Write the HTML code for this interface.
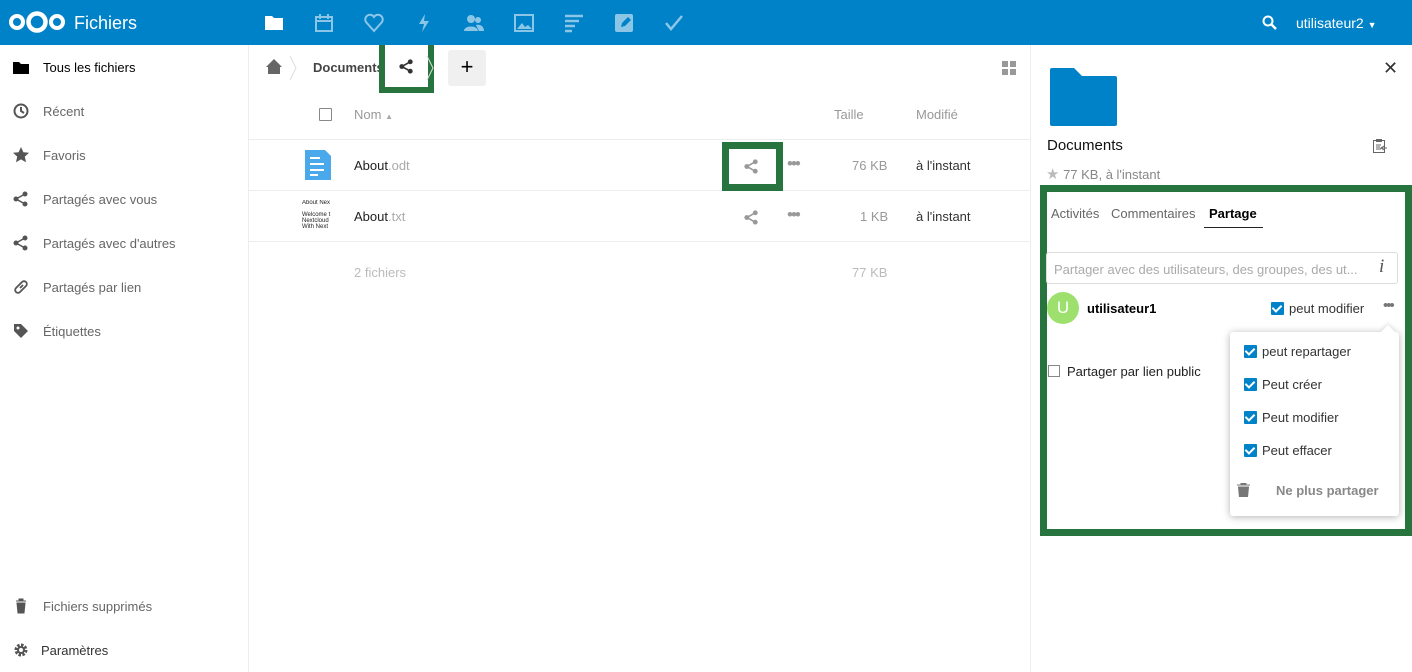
<!DOCTYPE html>
<html><head><meta charset="utf-8"><style>
*{box-sizing:border-box;margin:0;padding:0}
body{width:1412px;height:672px;overflow:hidden;font-family:"Liberation Sans",sans-serif;font-size:13px;color:#222;background:#fff;position:relative}
.abs{position:absolute}
#hdr{left:0;top:0;width:1412px;height:45px;background:#0082c9}
.ni{position:absolute;top:13px;width:20px;height:20px;opacity:.55}
#side{left:0;top:45px;width:249px;height:627px;border-right:1px solid #ededed}
.si{position:absolute;left:43px;color:#666;font-size:13px}
.sic{position:absolute;left:13px;width:16px;height:16px}
.g{color:#999}
.row{position:absolute;left:249px;width:781px;border-top:1px solid #ededed}
#rp{left:1030px;top:45px;width:382px;height:627px;border-left:1px solid #ededed}
.gb{border:7px solid #27743e;position:absolute}
.cb{position:absolute;width:13px;height:13px;background:#0082c9;border-radius:1px}
.cb:after{content:"";position:absolute;left:3px;top:1px;width:4px;height:7px;border:solid #fff;border-width:0 2px 2px 0;transform:rotate(45deg)}
.dots{position:absolute;color:#999;font-size:17px;letter-spacing:-2px}
</style></head><body>
<div id="hdr" class="abs">
 <svg class="abs" style="left:8px;top:10px" width="58" height="24" viewBox="0 0 58 24"><circle cx="9" cy="12" r="6" fill="none" stroke="#fff" stroke-width="4"/><circle cx="29" cy="12" r="8.5" fill="none" stroke="#fff" stroke-width="4.5"/><circle cx="49" cy="12" r="6" fill="none" stroke="#fff" stroke-width="4"/></svg>
 <div class="abs" style="left:74px;top:13px;color:#fff;font-size:18px">Fichiers</div>
 <svg class="ni" style="left:264px;opacity:1" viewBox="0 0 20 20"><path d="M1 3h7l2 2h9v12H1z" fill="#fff"/></svg>
 <svg class="ni" style="left:314px" viewBox="0 0 20 20"><rect x="2" y="4" width="16" height="14" fill="none" stroke="#fff" stroke-width="2"/><path d="M2 8h16M6 1v5M14 1v5" stroke="#fff" stroke-width="2"/></svg>
 <svg class="ni" style="left:364px" viewBox="0 0 20 20"><path d="M10 18L2 9a4 4 0 0 1 8-5 4 4 0 0 1 8 5z" fill="none" stroke="#fff" stroke-width="2"/></svg>
 <svg class="ni" style="left:414px" viewBox="0 0 20 20"><path d="M11 1L5 11h5l-2 8 7-11h-5z" fill="#fff"/></svg>
 <svg class="ni" style="left:464px" viewBox="0 0 20 20"><circle cx="7" cy="6" r="4" fill="#fff"/><circle cx="14" cy="7" r="3" fill="#fff"/><path d="M0 18c0-6 14-6 14 0zM12 12c4-1 8 1 8 6h-5z" fill="#fff"/></svg>
 <svg class="ni" style="left:514px" viewBox="0 0 20 20"><rect x="1" y="2" width="18" height="16" fill="none" stroke="#fff" stroke-width="2"/><path d="M3 16l5-6 3 4 3-2 4 4z" fill="#fff"/></svg>
 <svg class="ni" style="left:564px" viewBox="0 0 20 20"><path d="M1 3h18M1 8h14M1 13h10M1 18h7" stroke="#fff" stroke-width="2.5"/></svg>
 <svg class="ni" style="left:614px" viewBox="0 0 20 20"><rect x="1" y="1" width="18" height="18" rx="2" fill="#fff"/><path d="M7 14l1-4 6-6 3 3-6 6z" fill="#0082c9"/></svg>
 <svg class="ni" style="left:664px" viewBox="0 0 20 20"><path d="M2 10l5 6L18 3" fill="none" stroke="#fff" stroke-width="2.5"/></svg>
 <svg class="abs" style="left:1262px;top:15px" width="15" height="15" viewBox="0 0 15 15"><circle cx="6" cy="6" r="4.5" fill="none" stroke="#fff" stroke-width="2"/><path d="M9 9l5 5" stroke="#fff" stroke-width="2.5"/></svg>
 <div class="abs" style="left:1296px;top:15px;color:#fff;font-size:14px">utilisateur2 <span style="font-size:9px">▼</span></div>
</div>

<div id="side" class="abs">
 <svg class="sic" style="top:15px" viewBox="0 0 16 16"><path d="M0 2h6l2 2h8v10H0z" fill="#000"/></svg>
 <div class="si" style="top:15px;color:#000">Tous les fichiers</div>
 <svg class="sic" style="top:58px" viewBox="0 0 16 16"><circle cx="8" cy="8" r="6.5" fill="none" stroke="#555" stroke-width="2"/><path d="M8 4v4l3 2" fill="none" stroke="#555" stroke-width="2"/></svg>
 <div class="si" style="top:59px">Récent</div>
 <svg class="sic" style="top:102px" viewBox="0 0 16 16"><path d="M8 0l2.4 5.2 5.6.6-4.2 3.8 1.2 5.6L8 12.4 3 15.2l1.2-5.6L0 5.8l5.6-.6z" fill="#555"/></svg>
 <div class="si" style="top:103px">Favoris</div>
 <svg class="sic" style="top:146px" viewBox="0 0 16 16"><circle cx="12" cy="3" r="2.5" fill="#555"/><circle cx="3" cy="8" r="2.5" fill="#555"/><circle cx="12" cy="13" r="2.5" fill="#555"/><path d="M12 3L3 8l9 5" fill="none" stroke="#555" stroke-width="1.5"/></svg>
 <div class="si" style="top:147px">Partagés avec vous</div>
 <svg class="sic" style="top:190px" viewBox="0 0 16 16"><circle cx="12" cy="3" r="2.5" fill="#555"/><circle cx="3" cy="8" r="2.5" fill="#555"/><circle cx="12" cy="13" r="2.5" fill="#555"/><path d="M12 3L3 8l9 5" fill="none" stroke="#555" stroke-width="1.5"/></svg>
 <div class="si" style="top:191px">Partagés avec d'autres</div>
 <svg class="sic" style="top:234px" viewBox="0 0 16 16"><path d="M7 9l3-3M6 6l-3 3a2.5 2.5 0 0 0 4 4l3-3M10 10l3-3a2.5 2.5 0 0 0-4-4L6 6" fill="none" stroke="#555" stroke-width="1.8"/></svg>
 <div class="si" style="top:235px">Partagés par lien</div>
 <svg class="sic" style="top:278px" viewBox="0 0 16 16"><path d="M1 1h7l7 7-7 7-7-7z" fill="#555"/><circle cx="5" cy="5" r="1.5" fill="#fff"/></svg>
 <div class="si" style="top:279px">Étiquettes</div>
 <svg class="sic" style="top:553px" viewBox="0 0 16 16"><path d="M3 3h10M6 3V1h4v2M4 5h8l-1 10H5z" fill="#555" stroke="#555"/></svg>
 <div class="si" style="top:554px">Fichiers supprimés</div>
 <svg class="sic" style="top:597px" viewBox="0 0 16 16"><circle cx="8" cy="8" r="5" fill="none" stroke="#555" stroke-width="3" stroke-dasharray="2.5 1.4"/><circle cx="8" cy="8" r="3" fill="none" stroke="#555" stroke-width="2"/></svg>
 <div class="si" style="top:598px;left:41px;color:#333">Paramètres</div>
</div>

<svg class="abs" style="left:266px;top:59px" width="16" height="15" viewBox="0 0 16 15"><path d="M8 0L0 8h2v7h12V8h2z" fill="#666"/></svg>
<svg class="abs" style="left:289px;top:56px" width="8" height="24"><path d="M1 0l6 12-6 12" fill="none" stroke="#ddd"/></svg>
<div class="abs" style="left:313px;top:60px;font-weight:bold;color:#444">Documents</div>
<div class="gb" style="left:379px;top:45px;width:55px;height:48px;border-width:0 6px 6px 6px;background:#fff"></div>
<svg class="abs" style="left:399px;top:59px" width="15" height="15" viewBox="0 0 16 16"><circle cx="12" cy="3" r="2.6" fill="#333"/><circle cx="3" cy="8" r="2.6" fill="#333"/><circle cx="12" cy="13" r="2.6" fill="#333"/><path d="M12 3L3 8l9 5" fill="none" stroke="#333" stroke-width="1.7"/></svg>
<svg class="abs" style="left:426px;top:56px" width="8" height="24"><path d="M1 0l6 12-6 12" fill="none" stroke="#ddd"/></svg>
<div class="abs" style="left:448px;top:50px;width:38px;height:36px;background:#f0f0f0;border-radius:3px;text-align:center;font-size:22px;line-height:34px;color:#000">+</div>
<svg class="abs" style="left:1002px;top:61px" width="14" height="14"><rect x="0" y="0" width="6" height="6" fill="#999"/><rect x="8" y="0" width="6" height="6" fill="#999"/><rect x="0" y="8" width="6" height="6" fill="#999"/><rect x="8" y="8" width="6" height="6" fill="#999"/></svg>

<div class="abs" style="left:319px;top:108px;width:13px;height:13px;border:1px solid #888;border-radius:1px"></div>
<div class="abs g" style="left:354px;top:107px">Nom <span style="font-size:8px;color:#aaa">▲</span></div>
<div class="abs g" style="left:834px;top:107px">Taille</div>
<div class="abs g" style="left:916px;top:107px">Modifié</div>
<div class="row" style="top:139px;height:52px"></div>
<div class="row" style="top:190px;height:52px"></div>
<div class="row" style="top:241px;height:1px"></div>

<svg class="abs" style="left:305px;top:150px" width="26" height="30"><path d="M0 0h20l6 6v24H0z" fill="#4aa9ea"/><path d="M5 8h10M5 14h14M5 20h14M5 25h8" stroke="#fff" stroke-width="2"/></svg>
<div class="abs" style="left:354px;top:158px">About<span style="color:#aaa">.odt</span></div>
<div class="gb" style="left:722px;top:142px;width:61px;height:49px"></div>
<svg class="abs" style="left:744px;top:159px" width="15" height="15" viewBox="0 0 16 16"><circle cx="12" cy="3" r="2.6" fill="#999"/><circle cx="3" cy="8" r="2.6" fill="#999"/><circle cx="12" cy="13" r="2.6" fill="#999"/><path d="M12 3L3 8l9 5" fill="none" stroke="#999" stroke-width="1.7"/></svg>
<div class="dots" style="left:787px;top:154px">•••</div>
<div class="abs g" style="left:852px;top:158px">76 KB</div>
<div class="abs" style="left:916px;top:158px;color:#333">à l'instant</div>

<div class="abs" style="left:302px;top:200px;width:33px;height:34px;overflow:hidden;font-size:6px;line-height:6px;color:#222;white-space:nowrap">About Nex<br><br>Welcome t<br>Nextcloud<br>With Next</div>
<div class="abs" style="left:354px;top:209px">About<span style="color:#aaa">.txt</span></div>
<svg class="abs" style="left:744px;top:210px" width="15" height="15" viewBox="0 0 16 16"><circle cx="12" cy="3" r="2.6" fill="#999"/><circle cx="3" cy="8" r="2.6" fill="#999"/><circle cx="12" cy="13" r="2.6" fill="#999"/><path d="M12 3L3 8l9 5" fill="none" stroke="#999" stroke-width="1.7"/></svg>
<div class="dots" style="left:787px;top:205px">•••</div>
<div class="abs g" style="left:860px;top:209px">1 KB</div>
<div class="abs" style="left:916px;top:209px;color:#333">à l'instant</div>

<div class="abs" style="left:354px;top:265px;color:#bbb">2 fichiers</div>
<div class="abs" style="left:852px;top:265px;color:#bbb">77 KB</div>

<div id="rp" class="abs"></div>
<svg class="abs" style="left:1050px;top:68px" width="67" height="58"><path d="M0 2a2 2 0 0 1 2-2h22l8 8h33a2 2 0 0 1 2 2v46a2 2 0 0 1-2 2H2a2 2 0 0 1-2-2z" fill="#0082c9"/></svg>
<div class="abs" style="left:1383px;top:58px;font-size:18px;color:#333">✕</div>
<div class="abs" style="left:1047px;top:137px;font-size:15px;color:#111">Documents</div>
<svg class="abs" style="left:1372px;top:138px" width="16" height="16" viewBox="0 0 16 16"><rect x="1.5" y="2.5" width="11" height="12" fill="none" stroke="#666"/><rect x="4" y="1" width="6" height="3" fill="#666"/><path d="M4 7h5M4 9h4M4 11h5M9 10h6M12 8l-3 2 3 2" fill="none" stroke="#666"/></svg>
<div class="abs" style="left:1046px;top:165px;color:#888"><span style="color:#bbb;font-size:15px">★</span> 77 KB, à l'instant</div>

<div class="gb" style="left:1040px;top:185px;width:372px;height:351px"></div>
<div class="abs" style="left:1051px;top:206px;color:#666">Activités</div>
<div class="abs" style="left:1111px;top:206px;color:#666">Commentaires</div>
<div class="abs" style="left:1209px;top:206px;color:#000;font-weight:bold">Partage</div>
<div class="abs" style="left:1204px;top:227px;width:59px;height:1px;background:#222"></div>
<div class="abs" style="left:1046px;top:252px;width:352px;height:32px;border:1px solid #ddd;border-radius:3px"></div>
<div class="abs" style="left:1054px;top:262px;color:#aaa;white-space:nowrap">Partager avec des utilisateurs, des groupes, des ut...</div>
<div class="abs" style="left:1379px;top:256px;color:#555;font-family:'Liberation Serif',serif;font-style:italic;font-size:19px">i</div>
<div class="abs" style="left:1047px;top:292px;width:32px;height:32px;border-radius:50%;background:#9ee06d;color:#fff;text-align:center;line-height:32px;font-size:17px">U</div>
<div class="abs" style="left:1087px;top:301px;font-weight:bold;color:#000">utilisateur1</div>
<div class="cb" style="left:1271px;top:302px"></div>
<div class="abs" style="left:1289px;top:301px;color:#333">peut modifier</div>
<div class="dots" style="left:1383px;top:297px;color:#777;font-size:15px">•••</div>
<div class="abs" style="left:1048px;top:365px;width:12px;height:12px;border:1px solid #888"></div>
<div class="abs" style="left:1067px;top:364px;color:#222">Partager par lien public</div>

<div class="abs" style="left:1230px;top:332px;width:169px;height:184px;background:#fff;border-radius:3px;box-shadow:0 1px 8px rgba(0,0,0,.3)"></div>
<div class="abs" style="left:1383px;top:327px;width:10px;height:10px;background:#fff;transform:rotate(45deg);box-shadow:-2px -2px 3px rgba(0,0,0,.08)"></div>
<div class="cb" style="left:1244px;top:345px"></div><div class="abs" style="left:1262px;top:344px;color:#333">peut repartager</div>
<div class="cb" style="left:1244px;top:378px"></div><div class="abs" style="left:1262px;top:377px;color:#333">Peut créer</div>
<div class="cb" style="left:1244px;top:411px"></div><div class="abs" style="left:1262px;top:410px;color:#333">Peut modifier</div>
<div class="cb" style="left:1244px;top:444px"></div><div class="abs" style="left:1262px;top:443px;color:#333">Peut effacer</div>
<svg class="abs" style="left:1237px;top:483px" width="13" height="14" viewBox="0 0 13 14"><path d="M0 2h13M4 2V0h5v2M1.5 4h10l-1 10h-8z" fill="#777" stroke="#777"/></svg>
<div class="abs" style="left:1276px;top:483px;color:#888;font-weight:bold">Ne plus partager</div>
</body></html>
